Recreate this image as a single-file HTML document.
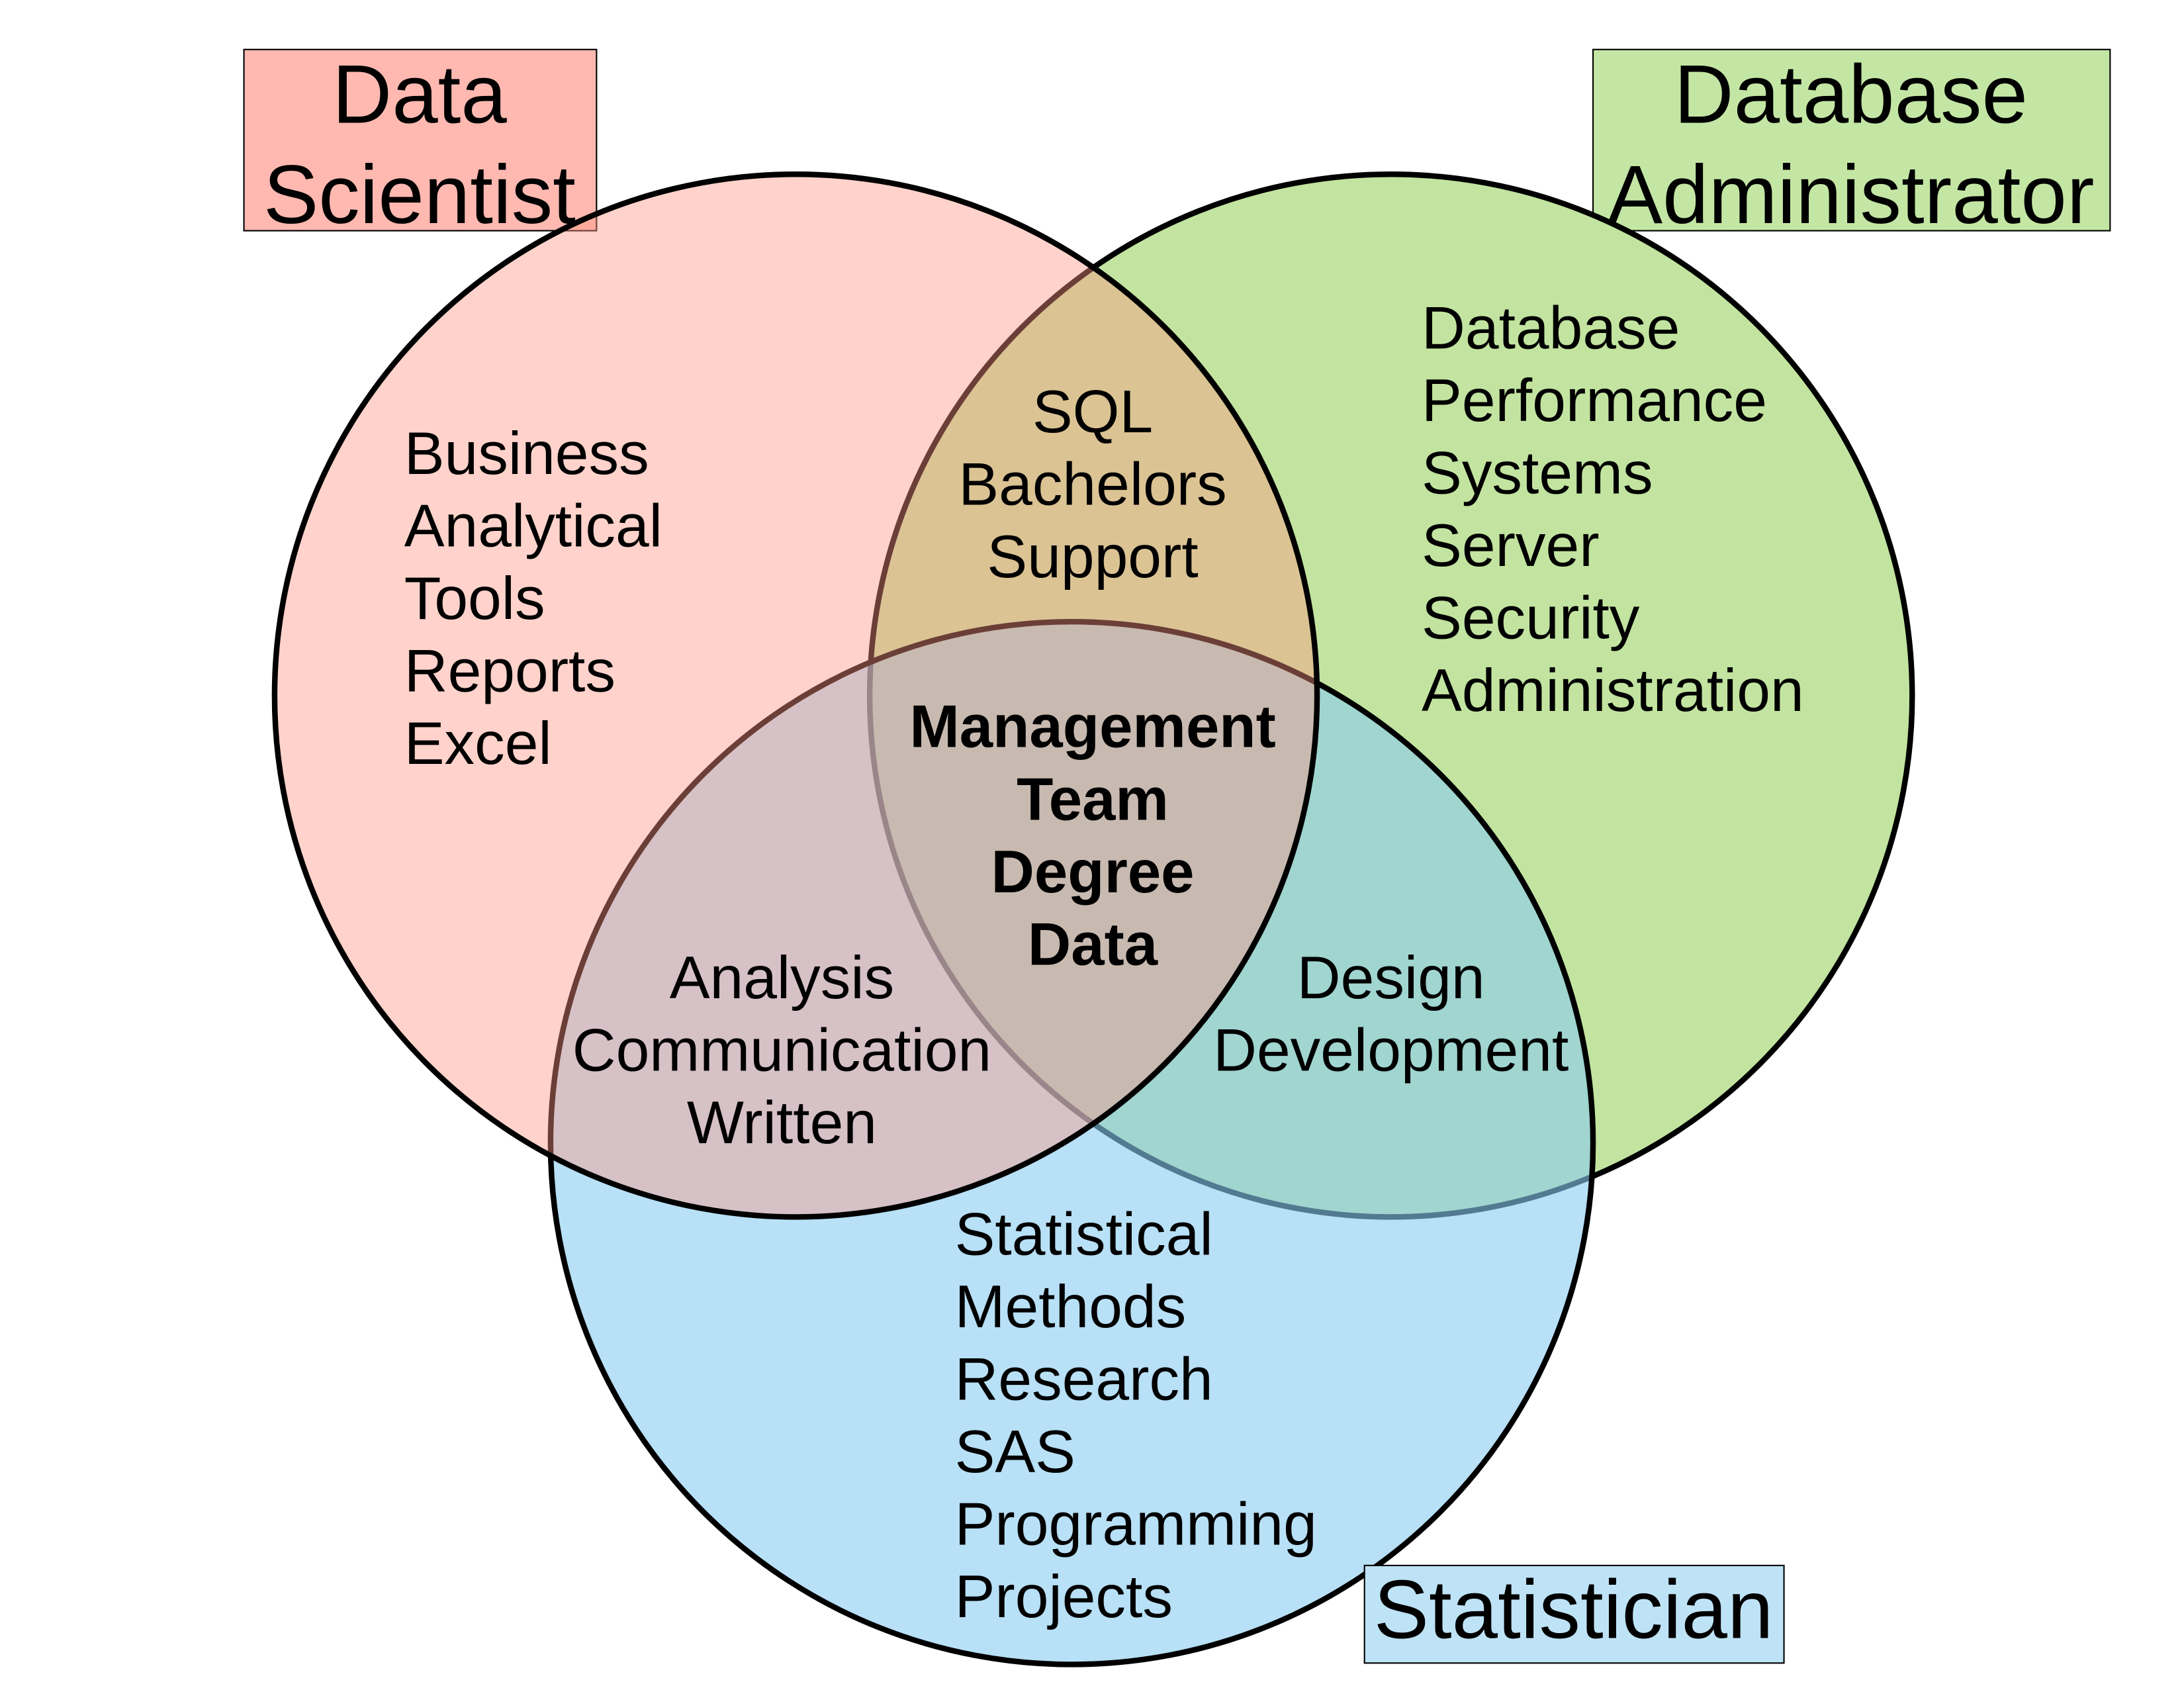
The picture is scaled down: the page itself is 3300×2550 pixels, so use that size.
<!DOCTYPE html>
<html><head><meta charset="utf-8"><style>
html,body{margin:0;padding:0;background:#fff;}
svg{display:block;}
text{font-family:"Liberation Sans",Arial,sans-serif;fill:#000;}
</style></head><body>
<svg width="3300" height="2550" viewBox="0 0 1567 1210.9" xmlns="http://www.w3.org/2000/svg">
<rect x="0" y="0" width="1567" height="1211" fill="#fff"/>
<rect x="175" y="35.5" width="253" height="130" fill="#ffb9b0" stroke="#000" stroke-width="1"/>
<rect x="1143" y="35.5" width="371" height="130" fill="#c4e6a4" stroke="#000" stroke-width="1"/>
<circle cx="998" cy="499" r="374" fill="#c2e4a0" stroke="#000" stroke-width="4"/>
<circle cx="769" cy="820" r="374" fill="rgb(137,203,240)" fill-opacity="0.6" stroke="#000" stroke-width="4"/>
<circle cx="571" cy="499" r="374" fill="rgb(255,150,130)" fill-opacity="0.42" stroke="#000" stroke-width="4"/>
<rect x="979" y="1123" width="301" height="70" fill="#bfe3f6" stroke="#000" stroke-width="1"/>

<g font-size="59.3" text-anchor="middle">
<text x="301" y="88">Data</text>
<text x="301" y="160">Scientist</text>
<text x="1328" y="88">Database</text>
<text x="1328" y="160">Administrator</text>
<text x="1129" y="1175">Statistician</text>
</g>

<g font-size="43.3">
<text x="290" y="340">Business</text>
<text x="290" y="392">Analytical</text>
<text x="290" y="444">Tools</text>
<text x="290" y="496">Reports</text>
<text x="290" y="548">Excel</text>

<text x="1020" y="250">Database</text>
<text x="1020" y="302">Performance</text>
<text x="1020" y="354">Systems</text>
<text x="1020" y="406">Server</text>
<text x="1020" y="458">Security</text>
<text x="1020" y="510">Administration</text>

<text x="685" y="900">Statistical</text>
<text x="685" y="952">Methods</text>
<text x="685" y="1004">Research</text>
<text x="685" y="1056">SAS</text>
<text x="685" y="1108">Programming</text>
<text x="685" y="1160">Projects</text>

<g text-anchor="middle">
<text x="784" y="310">SQL</text>
<text x="784" y="362">Bachelors</text>
<text x="784" y="414">Support</text>
<text x="561" y="716">Analysis</text>
<text x="561" y="768">Communication</text>
<text x="561" y="820">Written</text>
<text x="998" y="716">Design</text>
<text x="998" y="768">Development</text>
<g font-weight="bold" font-size="43">
<text x="784" y="536">Management</text>
<text x="784" y="588">Team</text>
<text x="784" y="640">Degree</text>
<text x="784" y="692">Data</text>
</g>
</g>
</g>
</svg>
</body></html>
